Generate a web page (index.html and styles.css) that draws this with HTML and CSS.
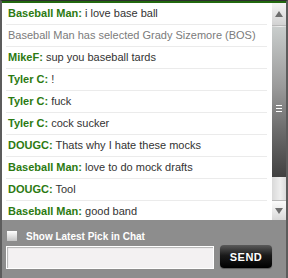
FILE: index.html
```html
<!DOCTYPE html>
<html lang="en">
<head>
    <meta charset="UTF-8">
    <title>Draft Chat</title>
    <link rel="stylesheet" href="styles.css">
</head>
<body>
    <div class="chat-box">
        <div class="chat-main">
            <!-- Messages -->
            <div class="messages">
                <div class="msg"><span class="name">Baseball Man:</span> i love base ball</div>
                <div class="msg system">Baseball Man has selected Grady Sizemore (BOS)</div>
                <div class="msg"><span class="name">MikeF:</span> sup you baseball tards</div>
                <div class="msg"><span class="name">Tyler C:</span> !</div>
                <div class="msg"><span class="name">Tyler C:</span> fuck</div>
                <div class="msg"><span class="name">Tyler C:</span> cock sucker</div>
                <div class="msg"><span class="name">DOUGC:</span> Thats why I hate these mocks</div>
                <div class="msg"><span class="name">Baseball Man:</span> love to do mock drafts</div>
                <div class="msg"><span class="name">DOUGC:</span> Tool</div>
                <div class="msg"><span class="name">Baseball Man:</span> good band</div>
            </div>

            <!-- Scrollbar -->
            <div class="scrollbar">
                <div class="scroll-btn up"><span class="arrow-up"></span></div>
                <div class="track">
                    <div class="thumb"><span class="grip"></span></div>
                </div>
                <div class="scroll-btn down"><span class="arrow-down"></span></div>
            </div>
        </div>

        <div class="panel">
            <label class="option">
                <span class="check"></span>
                Show Latest Pick in Chat
            </label>
            <div class="send-row">
                <input type="text" class="chat-input">
                <button class="send-btn">SEND</button>
            </div>
        </div>
    </div>
</body>
</html>
```

FILE: styles.css
```css
body {
    margin: 0;
    padding: 0;
    font-family: "Liberation Sans", Arial, sans-serif;
    background-color: #ffffff;
}

.chat-box {
    width: 284px;
    height: 277px;
    border-left: 2px solid #5c5c5c;
    border-right: 2px solid #5c5c5c;
    border-top: 1px solid #2e2e2e;
    display: flex;
    flex-direction: column;
}

.chat-main {
    display: flex;
    height: 217px;
    border-top: 2px solid #22680f;
    background-color: #ffffff;
}

.messages {
    flex: 1;
    overflow: hidden;
    padding: 0 5px 0 4px;
}

.msg {
    height: 21px;
    line-height: 21px;
    padding-left: 2px;
    border-bottom: 1px solid #ebebeb;
    font-size: 11px;
    color: #333333;
    white-space: nowrap;
}

.msg.system {
    color: #7b7b7b;
}

.name {
    font-weight: bold;
    color: #2c7a12;
}

/* Scrollbar */
.scrollbar {
    width: 14px;
    display: flex;
    flex-direction: column;
    background-color: #e4e4e4;
}

.scroll-btn {
    display: flex;
    align-items: center;
    justify-content: center;
    background: linear-gradient(to bottom, #f4f4f4, #d2d2d2);
    box-sizing: border-box;
}

.scroll-btn.up {
    height: 23px;
    border-bottom: 1px solid #b8b8b8;
}

.scroll-btn.down {
    height: 20px;
    border-top: 1px solid #b8b8b8;
    background: linear-gradient(to bottom, #fbfbfb, #d8d8d8);
}

.arrow-up {
    width: 0;
    height: 0;
    border-left: 4px solid transparent;
    border-right: 4px solid transparent;
    border-bottom: 6px solid #6e6e6e;
}

.arrow-down {
    width: 0;
    height: 0;
    border-left: 4px solid transparent;
    border-right: 4px solid transparent;
    border-top: 6px solid #6e6e6e;
}

.track {
    flex: 1;
    background: linear-gradient(to right, #d9d9d9, #eeeeee 60%, #dadada);
}

.thumb {
    margin-top: 1px;
    height: 150px;
    display: flex;
    align-items: center;
    justify-content: center;
    background: linear-gradient(to bottom, #c9cdcc, #9a9a9a 40%, #6a6a6a 70%, #414141);
}

.grip {
    width: 6px;
    height: 5px;
    margin-top: 12px;
    border-top: 1px solid #ffffff;
    border-bottom: 1px solid #ffffff;
    position: relative;
}

.grip::after {
    content: "";
    position: absolute;
    left: 0;
    right: 0;
    top: 2px;
    border-top: 1px solid #ffffff;
}

/* Bottom panel */
.panel {
    flex: 1;
    background-color: #8d8d8d;
    padding: 11px 0 0 5px;
}

.option {
    display: flex;
    align-items: center;
    height: 10px;
    font-size: 10px;
    font-weight: bold;
    color: #ffffff;
}

.check {
    width: 10px;
    height: 10px;
    margin-right: 9px;
    background: linear-gradient(to bottom, #ffffff, #c4c4c4);
}

.send-row {
    display: flex;
    align-items: flex-start;
    margin-top: 5px;
    margin-left: -1px;
}

.chat-input {
    width: 208px;
    height: 23px;
    box-sizing: border-box;
    margin: 0;
    border: 1px solid #ffffff;
    background-color: #f3f1f2;
    box-shadow: inset 1px 1px 1px #b4b4b4;
    padding: 0 4px;
    font-size: 11px;
    outline: none;
}

.send-btn {
    width: 52px;
    height: 23px;
    margin: -1px 0 0 6px;
    padding: 0;
    border: none;
    border-radius: 4px;
    background: linear-gradient(to bottom, #5a5a5a, #1a1a1a 45%, #000000);
    box-shadow: 0 1px 1px #5a5a5a;
    color: #ffffff;
    font-family: "Liberation Sans", Arial, sans-serif;
    font-size: 11px;
    font-weight: bold;
    letter-spacing: 0.5px;
    cursor: pointer;
}
```
